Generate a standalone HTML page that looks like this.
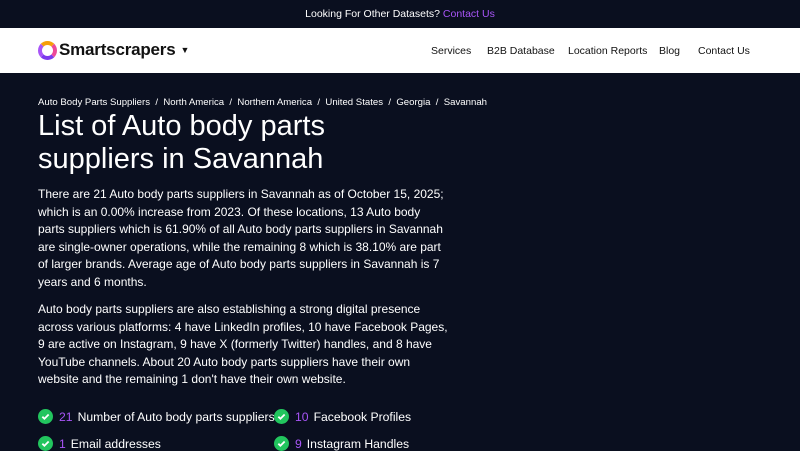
<!DOCTYPE html>
<html><head><meta charset="utf-8"><style>
*{margin:0;padding:0;box-sizing:border-box}
body{width:800px;height:450px;overflow:hidden;background:#0a0f1f;font-family:"Liberation Sans",sans-serif;color:#fff;position:relative}
.top{height:28px;background:#0a0f1f;text-align:center;font-size:10.5px;line-height:28px;color:#fff}
.top a{color:#a855f7;text-decoration:none}
.nav{height:45px;background:#fff;position:relative}
.logo{position:absolute;left:38px;top:12px;display:flex;align-items:center;color:#111;font-weight:bold;font-size:17px;letter-spacing:-0.2px}
.ring{width:19px;height:19px;border-radius:50%;border:4px solid;border-color:#f59e0b #ec4899 #7c3aed #a855f7;margin-right:2px}
.menu{position:absolute;top:17px;font-size:10.5px;color:#111}
.bc{position:absolute;left:38px;top:97px;font-size:9.6px;color:#fff;white-space:nowrap}
h1{position:absolute;left:38px;top:110px;font-weight:normal;font-size:29px;line-height:33px;width:340px}
p{position:absolute;left:38px;width:412px;font-size:12px;line-height:17.6px;color:#fff}
.it{position:absolute;font-size:12.2px;display:flex;align-items:center;white-space:nowrap}
.ck{width:15px;height:15px;border-radius:50%;background:#22c55e;margin-right:6px;display:inline-flex;align-items:center;justify-content:center}
.n{color:#a855f7;margin-right:5px}
</style></head><body>
<div class="top">Looking For Other Datasets? <a>Contact Us</a></div>
<div class="nav">
<div class="logo"><div class="ring"></div>Smartscrapers <span style="font-size:9px;margin-left:5px">▼</span></div>
<span class="menu" style="left:431px">Services</span>
<span class="menu" style="left:487px">B2B Database</span>
<span class="menu" style="left:568px">Location Reports</span>
<span class="menu" style="left:659px">Blog</span>
<span class="menu" style="left:698px">Contact Us</span>
</div>
<div class="bc">Auto Body Parts Suppliers &nbsp;/&nbsp; North America &nbsp;/&nbsp; Northern America &nbsp;/&nbsp; United States &nbsp;/&nbsp; Georgia &nbsp;/&nbsp; Savannah</div>
<h1>List of Auto body parts suppliers in Savannah</h1>
<p style="top:186px">There are 21 Auto body parts suppliers in Savannah as of October 15, 2025; which is an 0.00% increase from 2023. Of these locations, 13 Auto body parts suppliers which is 61.90% of all Auto body parts suppliers in Savannah are single-owner operations, while the remaining 8 which is 38.10% are part of larger brands. Average age of Auto body parts suppliers in Savannah is 7 years and 6 months.</p>
<p style="top:301px">Auto body parts suppliers are also establishing a strong digital presence across various platforms: 4 have LinkedIn profiles, 10 have Facebook Pages, 9 are active on Instagram, 9 have X (formerly Twitter) handles, and 8 have YouTube channels. About 20 Auto body parts suppliers have their own website and the remaining 1 don't have their own website.</p>
<div class="it" style="left:38px;top:409px"><span class="ck"><svg width="9" height="9" viewBox="0 0 10 10"><path d="M1.5 5.2l2.3 2.3 4.7-4.7" stroke="#fff" stroke-width="2" fill="none"/></svg></span><span class="n">21</span>Number of Auto body parts suppliers</div>
<div class="it" style="left:274px;top:409px"><span class="ck"><svg width="9" height="9" viewBox="0 0 10 10"><path d="M1.5 5.2l2.3 2.3 4.7-4.7" stroke="#fff" stroke-width="2" fill="none"/></svg></span><span class="n">10</span>Facebook Profiles</div>
<div class="it" style="left:38px;top:436px"><span class="ck"><svg width="9" height="9" viewBox="0 0 10 10"><path d="M1.5 5.2l2.3 2.3 4.7-4.7" stroke="#fff" stroke-width="2" fill="none"/></svg></span><span class="n">1</span>Email addresses</div>
<div class="it" style="left:274px;top:436px"><span class="ck"><svg width="9" height="9" viewBox="0 0 10 10"><path d="M1.5 5.2l2.3 2.3 4.7-4.7" stroke="#fff" stroke-width="2" fill="none"/></svg></span><span class="n">9</span>Instagram Handles</div>
</body></html>
